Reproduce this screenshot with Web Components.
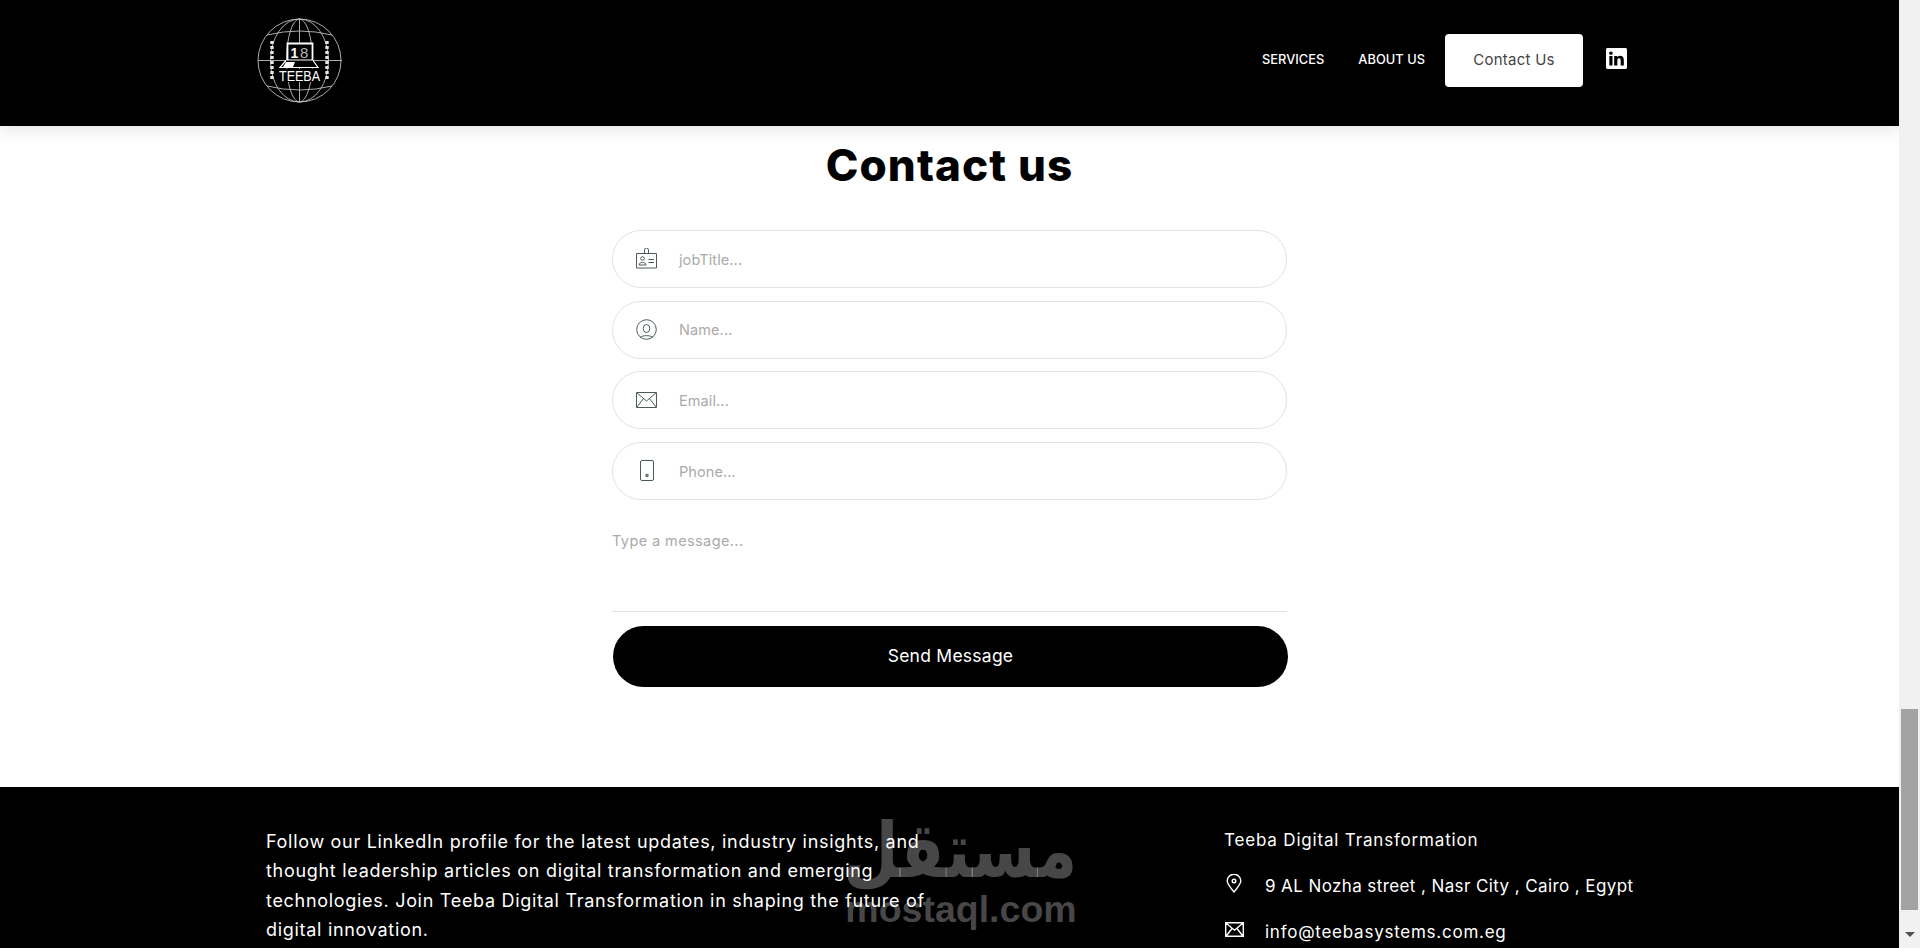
<!DOCTYPE html>
<html lang="en">
<head>
<meta charset="utf-8">
<title>Contact us</title>
<style>
  html, body { margin: 0; height: 948px; overflow: hidden; background: #fff; }
  body { display: flex; font-family: Inter, "Liberation Sans", sans-serif; }
  site-page { flex: 1; min-width: 0; }
</style>
</head>
<body>
<site-page>
  <site-header></site-header>
  <contact-form></contact-form>
  <site-footer></site-footer>
</site-page>
<fake-scrollbar></fake-scrollbar>

<script>
const FONT = 'Inter, "Liberation Sans", sans-serif';

class SitePage extends HTMLElement {
  constructor() {
    super();
    this.attachShadow({ mode: 'open' }).innerHTML = `
      <style>
        :host { display: flex; flex-direction: column; height: 948px; overflow: hidden; position: relative; }
      </style>
      <slot></slot>`;
  }
}

class SiteHeader extends HTMLElement {
  constructor() {
    super();
    this.attachShadow({ mode: 'open' }).innerHTML = `
      <style>
        :host {
          display: flex; align-items: flex-start; justify-content: space-between;
          flex: 0 0 126px; background: #000; padding: 0 272px 0 257px;
          box-shadow: 0 4px 16px rgba(0,0,0,.1); position: relative; z-index: 2;
        }
        svg.logo { display: block; margin-top: 18px; }
        nav { display: flex; align-items: center; height: 53px; margin-top: 34px; }
        a { color: #fff; font: 500 12.8px/1 ${FONT}; letter-spacing: .05px; text-decoration: none; }
        a.services { margin-right: 34px; }
        a.contact {
          display: flex; align-items: center; justify-content: center; box-sizing: border-box;
          width: 138px; height: 53px; margin-left: 20px; padding-bottom: 2px; background: #fff; border-radius: 4px;
          color: #444; font-weight: 400; font-size: 15px; letter-spacing: .25px;
        }
        svg.in { display: block; margin-left: 23px; margin-top: -4px; }
      </style>
      <svg class="logo" width="85" height="85" viewBox="0 0 85 85" fill="none" stroke="#bdbdbd" stroke-width=".9">
        <circle cx="42.5" cy="42.5" r="41.500"/>
        <ellipse cx="42.5" cy="42.5" rx="13" ry="41.500"/>
        <ellipse cx="42.5" cy="42.5" rx="29" ry="41.500"/>
        <path d="M42.5 1v83M1 42.5h84M10 17q32.500-8 65 0M10 68q32.500 8 65 0"/>
        <path d="M15 23v39M70 23v39" stroke="#e6e6e6" stroke-width="3.400" stroke-dasharray="3 2"/>
        <path d="M30.5 25.500h25v17h-25z" fill="#000" stroke="#fff" stroke-width="1.800"/>
        <path d="M29 42.500l-6 7h38l-5-7" fill="#000" stroke="#fff" stroke-width="1.200"/>
        <path d="M26 49l3-5h9l-2 5z" fill="#fff" stroke="none"/>
        <text x="33.500" y="39.500" fill="#fff" stroke="none" font-family="Liberation Sans" font-weight="700" font-size="14">1</text>
        <text x="43" y="40" fill="#b5b5b5" stroke="none" font-family="Liberation Sans" font-size="15">8</text>
        <rect x="20" y="51" width="45" height="13" fill="#000" stroke="none"/>
        <text x="22" y="63" fill="#fff" stroke="none" font-family="Liberation Sans" font-size="15" textLength="41" lengthAdjust="spacingAndGlyphs">TEEBA</text>
      </svg>
      <nav>
        <a class="services" href="#">SERVICES</a>
        <a href="#">ABOUT US</a>
        <a class="contact" href="#">Contact Us</a>
        <svg class="in" width="21" height="21" viewBox="0 0 16 16" fill="#fff"><path d="M0 1.146C0 .513.526 0 1.175 0h13.65C15.474 0 16 .513 16 1.146v13.708c0 .633-.526 1.146-1.175 1.146H1.175C.526 16 0 15.487 0 14.854V1.146zm4.943 12.248V6.169H2.542v7.225h2.401zm-1.2-8.212c.837 0 1.358-.554 1.358-1.248-.015-.709-.52-1.248-1.342-1.248-.822 0-1.359.54-1.359 1.248 0 .694.521 1.248 1.327 1.248h.016zm4.908 8.212V9.359c0-.216.016-.432.08-.586.173-.431.568-.878 1.232-.878.869 0 1.216.662 1.216 1.634v3.865h2.401V9.25c0-2.22-1.184-3.252-2.764-3.252-1.274 0-1.845.7-2.165 1.193v.025h-.016a5.54 5.54 0 0 1 .016-.025V6.169h-2.4c.03.678 0 7.225 0 7.225h2.4z"/></svg>
      </nav>`;
  }
}

class FieldRow extends HTMLElement {
  constructor() {
    super();
    this.attachShadow({ mode: 'open' }).innerHTML = `
      <style>
        :host {
          display: flex; align-items: center; box-sizing: border-box; height: 58px;
          padding-left: 24px; border: 1px solid #e3e3e3; border-radius: 29px;
          color: #aaa; font: 400 14.5px/1 ${FONT}; letter-spacing: .1px;
        }
        .icon { display: flex; justify-content: center; width: 21px; margin-right: 21px; margin-left: -1px; margin-top: -1px; }
        .text { padding: 2px 0 0 1px; }
      </style>
      <span class="icon"><slot name="icon"></slot></span>
      <span class="text"><slot></slot></span>`;
  }
}

class ContactForm extends HTMLElement {
  constructor() {
    super();
    this.attachShadow({ mode: 'open' }).innerHTML = `
      <style>
        :host {
          display: flex; flex-direction: column; align-items: center;
          flex: 0 0 661px; box-sizing: border-box; padding-top: 14px; background: #fff;
        }
        h1 { margin: 0 0 38px; color: #000; font: 800 44px/50px ${FONT}; letter-spacing: 1.1px; padding-bottom: 2px; }
        form { display: flex; flex-direction: column; gap: 12.67px; width: 675px; }
        .message {
          box-sizing: border-box; width: 674.5px; height: 100.5px; margin-top: -1px; padding-top: 20.5px;
          border-bottom: 1px solid #e3e3e3; color: #aaa; font: 400 14.5px/17px ${FONT}; letter-spacing: .4px;
        }
        button {
          width: 675px; height: 61px; margin: 1.5px 0 0 1px; padding: 0 0 2px; border: 0; border-radius: 30.5px;
          background: #000; color: #fff; font: 400 17.5px/1 ${FONT}; letter-spacing: .25px;
        }
        svg { display: block; fill: none; stroke: #4d5a5a; }
      </style>
      <h1>Contact us</h1>
      <form>
        <field-row>
          <svg slot="icon" width="21" height="21" viewBox="0 0 21 21"><path d="M.5 5.500h20v14.500H.5zM8.500 5.500V2a2 2 0 0 1 4 0v3.500"/><circle cx="6.500" cy="10.500" r="1.800"/><path d="M3 17c0-3.500 7-3.500 7 0zM12.500 11.500h5.500M12.500 14.500h5.500"/></svg>
          jobTitle...
        </field-row>
        <field-row>
          <svg slot="icon" width="21" height="21" viewBox="0 0 21 21"><circle cx="10.500" cy="10.500" r="9.800"/><ellipse cx="10.500" cy="9.500" rx="3.300" ry="4"/><path d="M4 18.500c3-2.500 10-2.500 13 0"/></svg>
          Name...
        </field-row>
        <field-row>
          <svg slot="icon" width="21" height="16" viewBox="0 0 21 16"><path d="M.5.5h20v15H.5zM1 1l9.500 8 9.500-8M1 15l6.500-8.500M20 15l-6.500-8.500"/></svg>
          Email...
        </field-row>
        <field-row>
          <svg slot="icon" width="14" height="21" viewBox="0 0 14 21"><rect x=".5" y=".5" width="13" height="20" rx="1.500"/><circle cx="7" cy="15.500" r="1.100" stroke-width="1.200"/></svg>
          Phone...
        </field-row>
        <div class="message">Type a message...</div>
        <button type="button">Send Message</button>
      </form>`;
  }
}

class SiteFooter extends HTMLElement {
  constructor() {
    super();
    this.attachShadow({ mode: 'open' }).innerHTML = `
      <style>
        :host {
          display: flex; flex: 1; box-sizing: border-box; padding: 39.5px 0 0 266px;
          background: #000; color: #fff; font: 400 18px/29.5px ${FONT}; letter-spacing: .7px; position: relative;
        }
        .about { flex: 0 0 958px; }
        .info { display: flex; flex-direction: column; font-size: 17px; letter-spacing: .4px; }
        .title { line-height: 27px; margin: 0 0 18px; letter-spacing: .82px; }
        .row { display: flex; align-items: flex-start; height: 46px; line-height: 29.5px; }
        .row.mail { letter-spacing: .75px; }
        .row .icon { display: flex; justify-content: center; width: 20px; margin-right: 21px; }
        .pin { padding-top: 2px; }
        .env { padding-top: 4px; }
        svg { display: block; fill: none; stroke: #fff; stroke-width: 1.4; }
        .stamp {
          position: absolute; left: 845px; top: 36px; width: 232px; color: rgba(255,255,255,.28);
          text-align: center; letter-spacing: 0; pointer-events: none;
        }
        .stamp .ar { font: 700 64px/68px "DejaVu Sans", sans-serif; transform: scaleY(1.2); transform-origin: bottom; }
        .stamp .en { font: 700 37.5px/36px "Liberation Sans", sans-serif; }
      </style>
      <div class="about">
        Follow our LinkedIn profile for the latest updates, industry insights, and<br>
        thought leadership articles on digital transformation and emerging<br>
        technologies. Join Teeba Digital Transformation in shaping the future of<br>
        digital innovation.
      </div>
      <div class="info">
        <div class="title">Teeba Digital Transformation</div>
        <div class="row">
          <span class="icon pin"><svg width="16" height="19" viewBox="0 0 16 19"><path d="M8 18C3 12 1.200 9.500 1.200 7a6.800 6.800 0 0 1 13.600 0C14.800 9.500 13 12 8 18z"/><circle cx="8" cy="7" r="1.800"/></svg></span>
          9 AL Nozha street , Nasr City , Cairo , Egypt
        </div>
        <div class="row mail">
          <span class="icon env"><svg width="19" height="15" viewBox="0 0 19 15"><path d="M.7.7h17.600v13.600H.7zM1.200 1.200l8.300 7 8.300-7M1.200 14l5.800-7.500M17.800 14L12 6.500"/></svg></span>
          info@teebasystems.com.eg
        </div>
      </div>
      <div class="stamp"><div class="ar" dir="rtl">مستقل</div><div class="en">mostaql.com</div></div>`;
  }
}

class FakeScrollbar extends HTMLElement {
  constructor() {
    super();
    this.attachShadow({ mode: 'open' }).innerHTML = `
      <style>
        :host { display: block; flex: 0 0 21px; height: 948px; background: #f1f1f1; box-sizing: border-box; padding: 709px 2px 0; }
        .thumb { height: 201px; background: #a3a3a3; }
        .arrow { width: 0; height: 0; margin: 22px auto 0; border: 5px solid transparent; border-top: 5px solid #505050; border-bottom: 0; }
      </style>
      <div class="thumb"></div>
      <div class="arrow"></div>`;
  }
}

customElements.define('site-page', SitePage);
customElements.define('site-header', SiteHeader);
customElements.define('field-row', FieldRow);
customElements.define('contact-form', ContactForm);
customElements.define('site-footer', SiteFooter);
customElements.define('fake-scrollbar', FakeScrollbar);
</script>
</body>
</html>
